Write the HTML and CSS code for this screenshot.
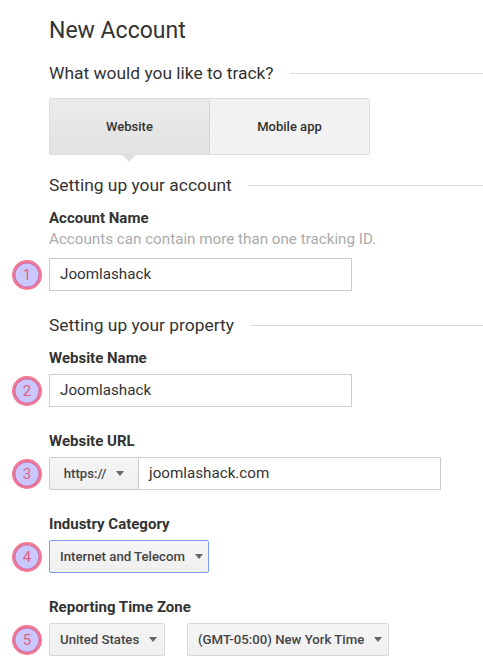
FILE: index.html
```html
<!DOCTYPE html>
<html>
<head>
<meta charset="utf-8">
<link rel="stylesheet" href="styles.css">
</head>
<body>
<div class="page">
  <h1 class="title">New Account</h1>

  <div class="section-head track-head"><span>What would you like to track?</span><i class="rule"></i></div>

  <div class="toggle">
    <div class="toggle-btn active">Website<span class="pointer"></span></div>
    <div class="toggle-btn">Mobile app</div>
  </div>

  <div class="section-head account-head"><span>Setting up your account</span><i class="rule"></i></div>

  <div class="label first">Account Name</div>
  <div class="help">Accounts can contain more than one tracking ID.</div>
  <div class="row help-row">
    <span class="badge">1</span>
    <div class="input w-name">Joomlashack</div>
  </div>

  <div class="section-head property-head"><span>Setting up your property</span><i class="rule"></i></div>

  <div class="label first">Website Name</div>
  <div class="row">
    <span class="badge">2</span>
    <div class="input w-name">Joomlashack</div>
  </div>

  <div class="label">Website URL</div>
  <div class="row">
    <span class="badge">3</span>
    <div class="select proto">https://<i class="caret"></i></div>
    <div class="input joined w-url">joomlashack.com</div>
  </div>

  <div class="label">Industry Category</div>
  <div class="row">
    <span class="badge">4</span>
    <div class="select focused w-ind">Internet and Telecom<i class="caret"></i></div>
  </div>

  <div class="label">Reporting Time Zone</div>
  <div class="row tz-row">
    <span class="badge">5</span>
    <div class="select w-country">United States<i class="caret"></i></div>
    <div class="select w-tz">(GMT-05:00) New York Time<i class="caret"></i></div>
  </div>
</div>
</body>
</html>
```

FILE: styles.css
```css
html, body {
  margin: 0;
  padding: 0;
  background: #fff;
}
body {
  font-family: Roboto, "Liberation Sans", Arial, sans-serif;
  color: #333;
}
.page {
  padding: 18px 0 0 49px;
}
.title {
  margin: 0;
  font-size: 23px;
  line-height: 26px;
  font-weight: 400;
  color: #333;
}
.section-head {
  display: flex;
  align-items: center;
  font-size: 17.4px;
  line-height: 20px;
  color: #333;
}
.section-head span {
  white-space: nowrap;
}
.section-head .rule {
  flex: 1;
  height: 1px;
  background: #ddd;
  margin-left: 16px;
  margin-top: 1px;
}
.track-head { margin-top: 19px; }
.account-head { margin-top: 20px; }
.property-head { margin-top: 24px; }

.toggle {
  display: flex;
  width: 321px;
  height: 57px;
  margin-top: 15px;
  box-sizing: border-box;
  border: 1px solid #ddd;
  border-radius: 2px;
}
.toggle-btn {
  position: relative;
  flex: 1;
  display: flex;
  align-items: center;
  justify-content: center;
  font-size: 13px;
  font-weight: 500;
  color: #333;
  background: #f2f2f2;
}
.toggle-btn.active {
  background: linear-gradient(#ebebeb, #e2e2e2);
  border-right: 1px solid #d6d6d6;
}
.pointer {
  position: absolute;
  left: 72px;
  bottom: -8px;
  width: 0;
  height: 0;
  border-left: 7px solid transparent;
  border-right: 7px solid transparent;
  border-top: 7px solid #e1e1e1;
}

.label {
  margin-top: 25px;
  font-size: 15px;
  line-height: 18px;
  font-weight: 700;
  color: #333;
}
.label.first { margin-top: 14px; }
.help {
  margin-top: 3px;
  font-size: 15.2px;
  line-height: 18px;
  color: #aaa;
}
.row {
  position: relative;
  display: flex;
  margin-top: 7px;
}
.help-row { margin-top: 10px; }
.tz-row { gap: 22px; }

.badge {
  position: absolute;
  left: -37px;
  top: 50%;
  margin-top: -15px;
  width: 30px;
  height: 30px;
  box-sizing: border-box;
  border-radius: 50%;
  background: #c9c7fd;
  border: 2px solid #f5778f;
  box-shadow: inset 0 0 0 1.5px #d9679a;
  color: #e0607e;
  font-size: 15px;
  line-height: 26px;
  text-align: center;
}

.input {
  height: 33px;
  box-sizing: border-box;
  border: 1px solid #ccc;
  padding: 0 10px;
  font-size: 15.2px;
  line-height: 31px;
  color: #333;
  background: #fff;
}
.input.joined { border-left: none; }
.w-name { width: 303px; }
.w-url { width: 302px; }

.select {
  display: flex;
  align-items: center;
  justify-content: space-between;
  height: 33px;
  box-sizing: border-box;
  border: 1px solid #d9d9d9;
  border-radius: 2px;
  padding: 0 10px;
  font-size: 13.2px;
  font-weight: 500;
  color: #444;
  background: linear-gradient(#f5f5f5, #f0f0f0);
  white-space: nowrap;
}
.select.focused {
  border-color: #7b9cf0;
}
.proto {
  width: 90px;
  justify-content: center;
  border-radius: 2px 0 0 2px;
  border-color: #ccc;
}
.w-ind { width: 160px; }
.w-country { width: 116px; }
.w-tz { width: 202px; }
.caret {
  display: block;
  width: 0;
  height: 0;
  border-left: 4.5px solid transparent;
  border-right: 4.5px solid transparent;
  border-top: 5px solid #666;
  margin-left: 10px;
}
```
